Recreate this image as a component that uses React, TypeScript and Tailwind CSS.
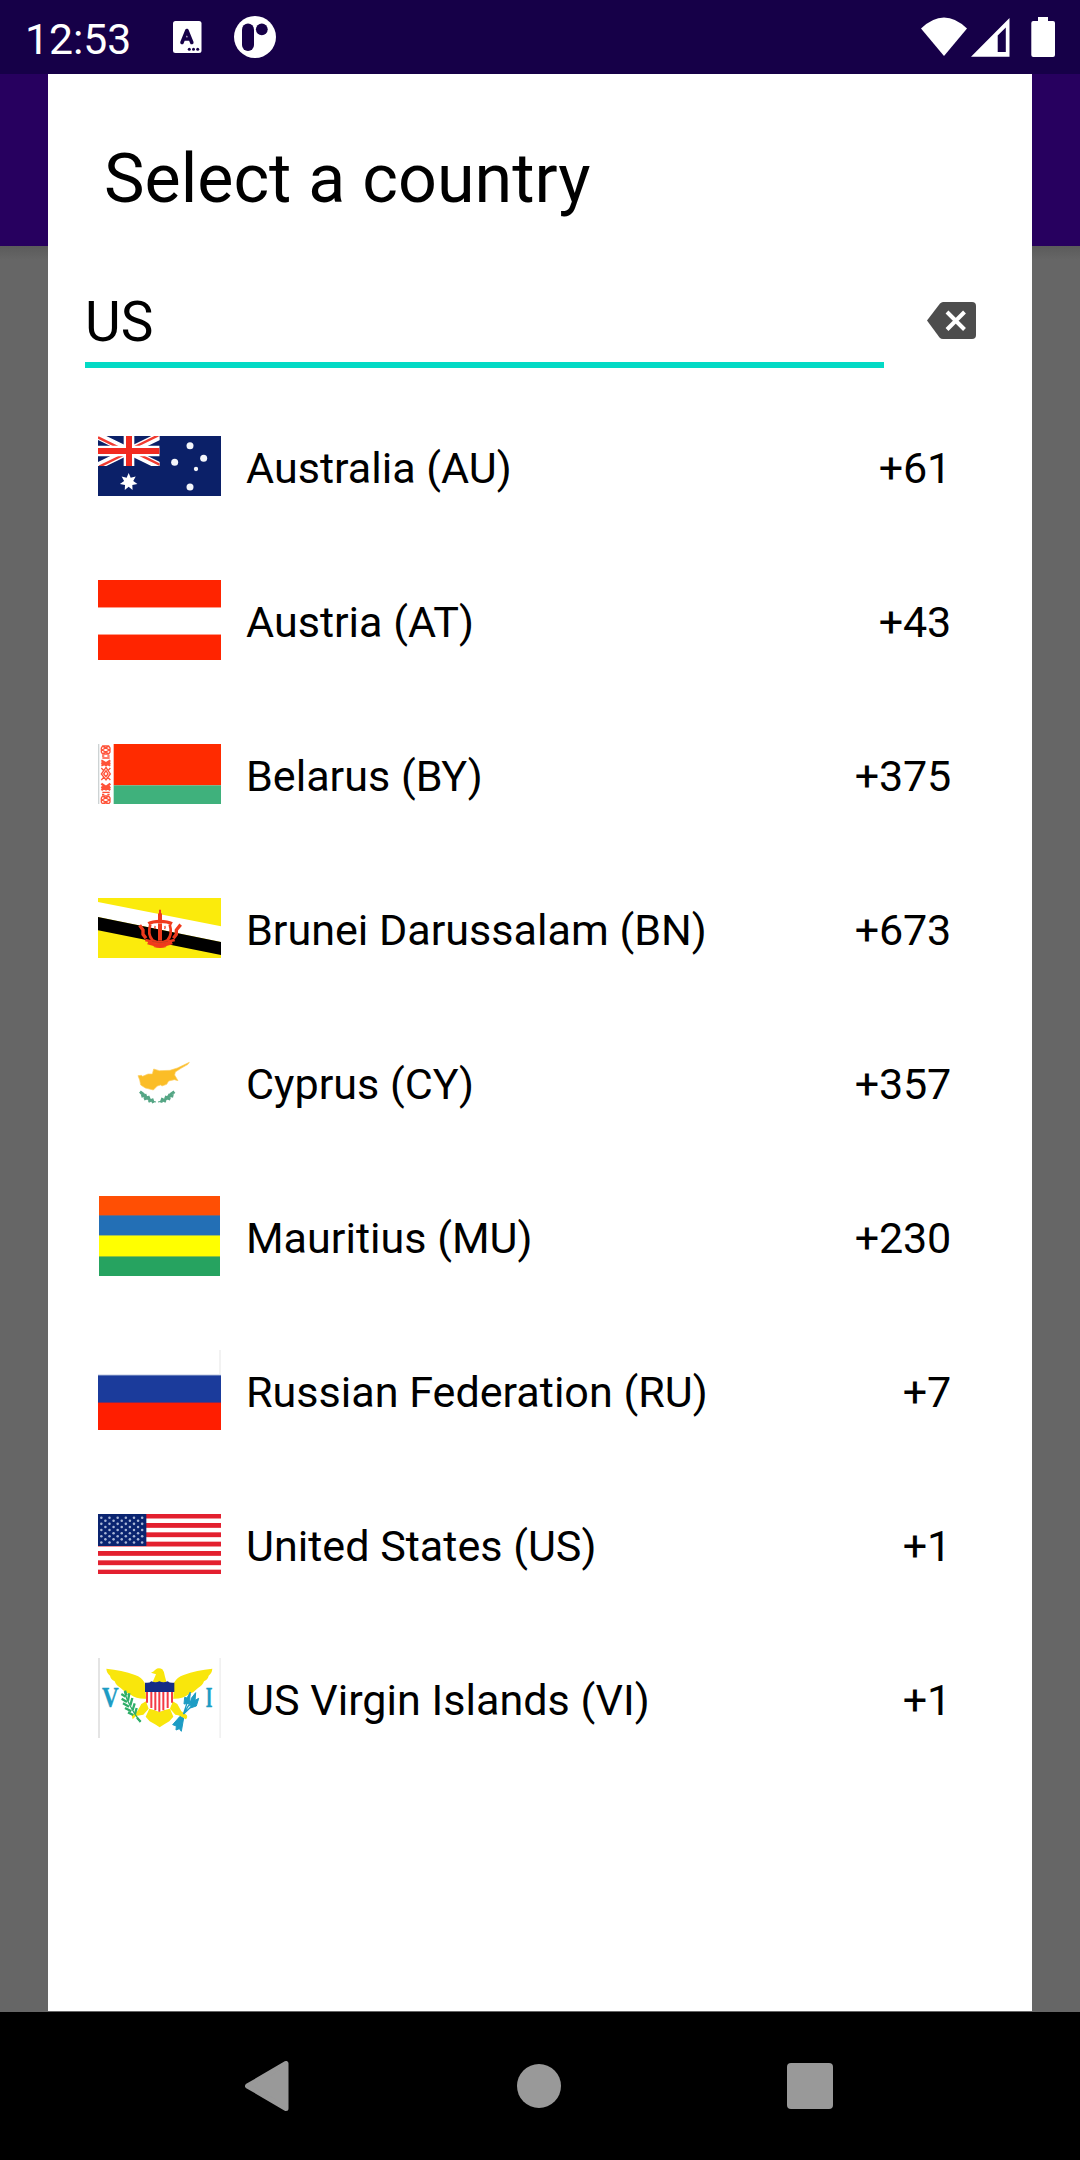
import type { ReactNode } from "react";

function AustraliaFlag() {
  const stars: [number, number, number][] = [
    [390, 527, 10.5],
    [344, 577, 10.5],
    [431, 565, 10.5],
    [408, 597, 6.5],
    [390, 651, 10.5],
  ];
  const burst = (cx: number, cy: number, r: number) =>
    Array.from({ length: 14 }, (_, i) => {
      const a = (Math.PI * i) / 7 - Math.PI / 2;
      const d = i % 2 ? r * 0.52 : r;
      return `${cx + d * Math.cos(a)},${cy + d * Math.sin(a)}`;
    }).join(" ");
  return (
    <svg className="block h-[60px] w-[123px]" viewBox="114 498 369 180" preserveAspectRatio="none">
      <rect x="114" y="498" width="369" height="180" fill="#0b2068" />
      <svg x="114" y="498" width="185" height="90" viewBox="0 0 185 90">
        <path d="M0 0L185 90M185 0L0 90" stroke="#fff" strokeWidth="22" />
        <path d="M0 4L75 41M185 86L110 49M181 -2L110 33M4 92L75 57" stroke="#f03a30" strokeWidth="7" />
        <path d="M93 0V90M0 45H185" stroke="#fff" strokeWidth="32" />
        <path d="M93 0V90M0 45H185" stroke="#f22a20" strokeWidth="18" />
      </svg>
      <polygon points={burst(206, 636, 27)} fill="#fff" />
      {stars.map(([x, y, r]) => (
        <circle key={`${x}-${y}`} cx={x} cy={y} r={r} fill="#f4f6fb" />
      ))}
    </svg>
  );
}

function Stripes({ children }: { children: ReactNode }) {
  return <div className="flex h-20 w-[123px] flex-col">{children}</div>;
}

function AustriaFlag() {
  return (
    <Stripes>
      <div className="h-[27px] bg-[#ff2400]" />
      <div className="h-px bg-[#ff9a88]" />
      <div className="h-[26px] bg-white" />
      <div className="h-px bg-[#ff9a88]" />
      <div className="h-[25px] bg-[#ff2400]" />
    </Stripes>
  );
}

function BelarusFlag() {
  return (
    <svg className="block h-[60px] w-[123px]" viewBox="54 552 369 180" preserveAspectRatio="none">
      <rect x="54" y="552" width="48" height="180" fill="#fff" />
      <rect x="54" y="552" width="4" height="180" fill="#cdd3d4" />
      <rect x="101" y="552" width="322" height="124" fill="#ff2b00" />
      <rect x="101" y="676" width="322" height="56" fill="#3fb17c" />
      <g fill="none" stroke="#ff5238" strokeWidth="4">
        <path d="M66 558l22 12-22 12M88 558l-22 12 22 12M64 564l4-6h18l4 6v12l-4 6h-18l-4-6z" />
        <path d="M66 588h7M82 588h7M67 594h22" />
        <path d="M64 601l14 8 13-8M64 608l14 8 13-8M64 617l14-6 13 6" strokeWidth="6" />
        <path d="M78 622l13 20-13 18-14-18zM78 632l6 10-6 8-7-8zM64 624l7 8M91 624l-7 8M64 660l7-8M91 660l-7-8" />
        <path d="M64 671l14 10 13-10M64 680l14 8 13-8M64 690l14-8 13 8" strokeWidth="7" />
        <path d="M67 697h22M66 703h7M82 703h7" />
        <path d="M66 708l22 12-22 12M88 708l-22 12 22 12M64 714l4-6h18l4 6v12l-4 6h-18l-4-6z" />
      </g>
    </svg>
  );
}

function BruneiFlag() {
  return (
    <svg className="block h-[60px] w-[123px]" viewBox="54 54 369 180" preserveAspectRatio="none">
      <rect x="54" y="54" width="369" height="180" fill="#fbeb0c" />
      <polygon points="54,66 423,139 423,186 54,111" fill="#fff" />
      <polygon points="54,111 423,186 423,225 54,151" fill="#000" />
      <g fill="none" stroke="#f03a1c">
        <path d="M240 89V124" strokeWidth="6" />
        <path d="M240 100V124" strokeWidth="12" />
        <path d="M205 131q12-7 35-7t36 7" strokeWidth="10" />
        <path d="M211 133q-9 30 6 47q23 16 46 0q15-17 6-47" strokeWidth="8" />
        <path d="M240 130V182" strokeWidth="12" />
        <path d="M226 138q-3 3 0 9M254 138q3 3 0 9" strokeWidth="4" />
        <path d="M179 136l10 14v13l9 12M302 134l-13 16v13l-9 12" strokeWidth="10" />
        <path d="M196 180q44 14 88 0M203 189q37 13 74 0M222 197q18 6 36 0" strokeWidth="8" />
      </g>
      <path d="M216 184q24 8 48 0" stroke="#b5411b" strokeWidth="2" fill="none" />
    </svg>
  );
}

function CyprusFlag() {
  return (
    <svg className="block h-20 w-[123px]" viewBox="54 6 369 240" preserveAspectRatio="none">
      <path
        d="M174 107L184 106L188 109L204 102L217 102L221 87L238 92L270 91L292 84L328 67L324 73L303 85L286 96L284 105L294 122L283 119L266 123L260 133L246 138L242 135L232 138L220 150L196 144L182 135L179 120Z"
        fill="#fbbd27"
        stroke="#fdcf62"
        strokeWidth="2"
      />
      <g stroke="#55a685" fill="none">
        <path d="M179 158Q194 180 228 186M284 158Q270 180 234 186" strokeWidth="3" />
        <path
          d="M180 155l12 9M184 169l16-4M194 163l8 14M192 178l17-7M204 168l7 16M205 185l15-7M216 176l4 13M283 155l-13 9M280 169l-16-4M269 163l-8 14M271 178l-17-7M260 168l-7 16M258 185l-15-7M248 174l-5 14"
          strokeWidth="8"
        />
      </g>
    </svg>
  );
}

function MauritiusFlag() {
  return (
    <Stripes>
      <div className="mx-px h-[19px] bg-[#ff4f04]" />
      <div className="mx-px h-px bg-[#7c6570]" />
      <div className="mx-px h-[19px] bg-[#236fb5]" />
      <div className="mx-px h-px bg-[#a2be55]" />
      <div className="mx-px h-5 bg-[#ffff00]" />
      <div className="mx-px h-px bg-[#8ec43a]" />
      <div className="mx-px h-[19px] bg-[#26a360]" />
    </Stripes>
  );
}

function RussiaFlag() {
  return (
    <Stripes>
      <div className="h-6 border-r-2 border-[#f2f2f2] bg-white" />
      <div className="h-px bg-[#dfe4f0]" />
      <div className="h-px bg-[#6078b8]" />
      <div className="h-[26px] bg-[#1b3b9b]" />
      <div className="h-px bg-[#7b2a5c]" />
      <div className="h-[27px] bg-[#ff1e00]" />
    </Stripes>
  );
}

function UnitedStatesFlag() {
  const rows = Array.from({ length: 9 }, (_, r) => r);
  return (
    <svg className="block h-[60px] w-[123px]" viewBox="54 72 369 180" preserveAspectRatio="none">
      <rect x="54" y="72" width="369" height="180" fill="#fff" />
      {[0, 1, 2, 3, 4, 5, 6].map((i) => (
        <rect key={i} x="54" y={71 + i * 28} width="369" height="14.5" fill="#e3202f" />
      ))}
      <rect x="54" y="72" width="145" height="96" fill="#0a2470" />
      {rows.flatMap((r) =>
        Array.from({ length: r % 2 ? 5 : 6 }, (_, c) => (
          <circle key={`${r}-${c}`} cx={64 + (r % 2 ? 12.2 : 0) + c * 24.5} cy={83 + r * 9.3} r="3.8" fill="#a9b6d6" />
        )),
      )}
    </svg>
  );
}

function VirginIslandsFlag() {
  return (
    <svg className="block h-20 w-[123px]" viewBox="54 504 369 240" preserveAspectRatio="none">
      <rect x="54" y="504" width="369" height="240" fill="#fff" />
      <rect x="54" y="504" width="6" height="240" fill="#e4e4e4" />
      <rect x="418" y="504" width="5" height="240" fill="#f1f1f1" />
      <g fill="#f9e60c">
        <path d="M79 536Q125 540 165 555Q185 562 194 578L200 626Q170 628 152 614Q134 608 122 594Q108 586 104 574Q92 568 90 557Q80 549 79 536Z" />
        <path d="M397 536Q350 540 311 555Q291 562 282 578L276 626Q306 628 324 614Q342 608 354 594Q368 586 372 574Q384 568 386 557Q396 549 397 536Z" />
        <path d="M213 548Q221 545 226 539Q236 531 247 538Q254 546 255 560L260 578H217L228 553Z" />
        <path d="M198 634L206 656L190 674L168 678L158 688L155 676L172 664L184 642Z" />
        <path d="M278 634L270 656L286 674L308 678L318 688L321 676L304 664L292 642Z" />
        <path d="M208 656L238 664L270 656L280 680L268 694L253 703L239 712L225 703L209 694L197 680Z" />
      </g>
      <path d="M197 604H281Q281 640 268 652Q256 660 238 666Q220 660 209 652Q197 640 197 604Z" fill="#fff" />
      <path d="M201 605V638M214 605V654M226 605V661M238 605V665M250 605V661M263 605V654M276 605V638" stroke="#f43a45" strokeWidth="6" />
      <path d="M195 578Q208 580 214 574Q227 580 238 574Q250 580 263 574Q270 580 283 578V606H195Z" fill="#152c86" />
      <g stroke="#2fae68" fill="none">
        <path d="M133 604Q144 645 181 696" strokeWidth="4" />
        <path d="M124 612l13 8M125 626l16 10M129 640l18 10M135 654l19 10M144 667l16 8M135 602l5 14M148 610l-4 22M157 624l-6 22M164 640l-6 20M170 654l-5 18M171 683l11 12" strokeWidth="7" />
      </g>
      <g fill="#1d9cc4" stroke="#1d9cc4">
        <path d="M310 673L330 612M310 673L346 612M310 673L354 630" fill="none" strokeWidth="4" />
        <path d="M331 606L321 624L314 622L312 642L328 640ZM347 608L334 625L329 648L345 634ZM356 625L340 634L331 654L349 648ZM300 679L278 704L289 708L288 720L298 716L304 724L311 684Z" strokeWidth="3" />
      </g>
      <path d="M296 670L320 684" stroke="#f9e60c" strokeWidth="9" />
      <g fill="#1d9cc4" stroke="#1d9cc4" strokeWidth="1" fontFamily="Liberation Serif, serif">
        <text x="66" y="650" fontSize="89" fontWeight="bold" textLength="50" lengthAdjust="spacingAndGlyphs">V</text>
        <text x="377" y="650" fontSize="89" fontWeight="bold" textLength="20" lengthAdjust="spacingAndGlyphs">I</text>
      </g>
    </svg>
  );
}

const countries = [
  { name: "Australia (AU)", code: "+61", Flag: AustraliaFlag },
  { name: "Austria (AT)", code: "+43", Flag: AustriaFlag },
  { name: "Belarus (BY)", code: "+375", Flag: BelarusFlag },
  { name: "Brunei Darussalam (BN)", code: "+673", Flag: BruneiFlag },
  { name: "Cyprus (CY)", code: "+357", Flag: CyprusFlag },
  { name: "Mauritius (MU)", code: "+230", Flag: MauritiusFlag },
  { name: "Russian Federation (RU)", code: "+7", Flag: RussiaFlag },
  { name: "United States (US)", code: "+1", Flag: UnitedStatesFlag },
  { name: "US Virgin Islands (VI)", code: "+1", Flag: VirginIslandsFlag },
];

function StatusBar() {
  return (
    <header className="flex h-[74px] items-center bg-[#160048] pl-[25px] text-white">
      <span className="w-[147px] pt-[5px] text-[42.7px] leading-none">12:53</span>
      <svg className="h-[74px] w-[30px]" viewBox="172 0 30 74">
        <rect x="173" y="21" width="28.5" height="32" rx="2.5" fill="#fff" />
        <path d="M182 42.5L186.9 30.5L191.8 42.5M184 39H190" fill="none" stroke="#160048" strokeWidth="3.6" strokeLinecap="round" strokeLinejoin="round" />
        <circle cx="189.3" cy="49.3" r="1.5" fill="#160048" />
        <circle cx="193.5" cy="49.3" r="1.5" fill="#160048" />
        <circle cx="197.7" cy="49.3" r="1.5" fill="#160048" />
      </svg>
      <svg className="ml-8 h-[74px] w-[42px]" viewBox="234 0 42 74">
        <circle cx="255" cy="37" r="21" fill="#fff" />
        <rect x="242" y="23.5" width="12" height="27.5" rx="6" fill="#160048" />
        <circle cx="261.8" cy="29.3" r="5.9" fill="#160048" />
      </svg>
      <svg className="ml-auto h-[74px] w-[160px]" viewBox="920 0 160 74" fill="#fff">
        <path d="M921 28.5Q944 6.500 967 28.5L944 56Z" />
        <path fillRule="evenodd" d="M1009.500 18V56.700H971ZM1005.800 27.500L997.700 35.500V52H1005.800Z" />
        <path d="M1038 17H1048V21H1053Q1055 21 1055 23V55Q1055 57 1053 57H1033.300Q1031.300 57 1031.300 55V23Q1031.300 21 1033.300 21H1038Z" />
      </svg>
    </header>
  );
}

function NavigationBar() {
  return (
    <nav className="flex h-[148px] items-center bg-black pl-[245px]">
      <svg className="h-[50px] w-11" viewBox="0 0 44 50">
        <path d="M2.500 25L41 2.500V47.500Z" fill="#999" stroke="#999" strokeWidth="5" strokeLinejoin="round" />
      </svg>
      <div className="ml-[228px] size-11 rounded-full bg-[#999]" />
      <div className="ml-[226px] size-[46px] rounded-[4px] bg-[#999]" />
    </nav>
  );
}

export default function App() {
  return (
    <div className="flex h-[2160px] w-[1080px] flex-col overflow-hidden bg-[#666666] font-[Roboto,sans-serif] text-black">
      <StatusBar />
      <div className="flex h-[1938px] bg-[linear-gradient(to_bottom,#27005f_172px,#5b5b5b_172px,#666666_186px)] px-12">
        <main className="flex h-[1937px] w-[984px] flex-col bg-white">
          <h1 className="h-[200px] pt-[66px] pl-14 text-[68.2px] leading-[78px] font-normal">Select a country</h1>
          <div className="flex h-[115px] pl-[37px]">
            <div className="h-[94px] w-[799px] border-b-[6px] border-[#03dac5] pt-[16px] text-[55px] leading-[64px]">US</div>
            <svg className="mt-7 ml-[43px] h-[37px] w-[49px]" viewBox="0 0 49 37">
              <path d="M13 1.500Q14.500 0 16 0H45Q49 0 49 4V33Q49 37 45 37H16Q14 37 12.500 35.500L0 18.500Z" fill="#4d4d4d" />
              <path d="M20 10L37.500 27.500M37.500 10L20 27.500" stroke="#fff" strokeWidth="4" />
            </svg>
          </div>
          <ul>
            {countries.map(({ name, code, Flag }) => (
              <li key={name} className="flex h-[154px] items-center pr-[81px] pl-[50px] text-[43.1px] leading-[52px]">
                <Flag />
                <span className="ml-[25px] pt-1.5">{name}</span>
                <span className="ml-auto pt-1.5 tracking-[-0.2px]">{code}</span>
              </li>
            ))}
          </ul>
        </main>
      </div>
      <NavigationBar />
    </div>
  );
}
